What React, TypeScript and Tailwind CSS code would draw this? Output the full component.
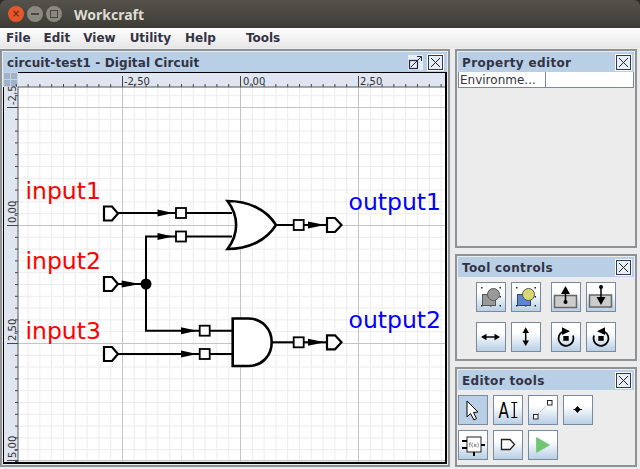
const rulerTicks = Array.from({ length: 37 }, (_, i) => i);

function CloseBox() {
  return (
    <span className="flex h-[15px] w-[15px] items-center justify-center border border-[#2f3a55] bg-[#e8eef6] shadow-[0_0_0_1px_#ffffff]">
      <svg width="11" height="11" viewBox="0 0 11 11">
        <path d="M1 1 L10 10 M10 1 L1 10" stroke="#222" strokeWidth="1" />
      </svg>
    </span>
  );
}

function PanelHeader({ title, maximize }: { title: string; maximize?: boolean }) {
  return (
    <div
      className={
        maximize
          ? "flex h-5 shrink-0 items-center bg-[#b8cfe5] pl-[4px] pr-[4px] font-['DejaVu_Sans'] text-[12px] font-bold tracking-[0.1px] text-[#333344]"
          : "flex h-5 shrink-0 items-center bg-[#b8cfe5] pl-[4px] pr-[3px] font-['DejaVu_Sans'] text-[12px] font-bold tracking-[0.35px] text-[#333344]"
      }
    >
      <span className="flex-1 whitespace-nowrap pt-px">{title}</span>
      {maximize && (
        <span className="mr-[5px] flex h-[15px] w-[15px] items-center justify-center bg-[#e8eef6]">
          <svg width="15" height="15" viewBox="0 0 15 15" fill="none" stroke="#1f2a45">
            <rect x="1.5" y="5.5" width="8" height="8" strokeWidth="1.2" />
            <path d="M3 12 L13 2 M9 1.5 H13.5 V6" />
          </svg>
        </span>
      )}
      <CloseBox />
    </div>
  );
}

function ToolButton({ children, active }: { children: React.ReactNode; active?: boolean }) {
  return (
    <div
      className={
        active
          ? "flex h-[30px] w-[30px] items-center justify-center border border-[#7a8a9c] bg-[#b8cfe5]"
          : "flex h-[30px] w-[30px] items-center justify-center justify-self-end border border-[#7a8a9c] bg-gradient-to-b from-white from-[35%] to-[#b8cfe5]"
      }
    >
      {children}
    </div>
  );
}

function Icon({ children }: { children: React.ReactNode }) {
  return (
    <svg width="28" height="28" viewBox="0 0 28 28">
      {children}
    </svg>
  );
}

function Dots() {
  return (
    <g fill="#222">
      <rect x="4" y="4" width="1.5" height="1.5" />
      <rect x="22.5" y="4" width="1.5" height="1.5" />
      <rect x="4" y="22" width="1.5" height="1.5" />
      <rect x="22.5" y="22" width="1.5" height="1.5" />
      <rect x="22.5" y="13" width="1.5" height="1.5" />
      <rect x="13" y="22" width="1.5" height="1.5" />
    </g>
  );
}

function Viewport() {
  return (
    <svg width="444" height="392" viewBox="3 72 444 392" className="block">
      <rect x="3" y="72" width="444" height="392" fill="#fff" />
      {/* minor grid */}
      <g stroke="#ececec" strokeWidth="1">
        {rulerTicks.map((i) => (
          <line key={i} x1={16.3 + i * 11.8} x2={16.3 + i * 11.8} y1="87" y2="464" />
        ))}
        {rulerTicks.map((i) => (
          <line key={i} y1={95.7 + i * 11.8} y2={95.7 + i * 11.8} x1="18" x2="447" />
        ))}
      </g>
      {/* major grid */}
      <g stroke="#c4c4c4" strokeWidth="1">
        <line x1="122.5" x2="122.5" y1="87" y2="464" />
        <line x1="240.5" x2="240.5" y1="87" y2="464" />
        <line x1="358.5" x2="358.5" y1="87" y2="464" />
        <line y1="107.5" y2="107.5" x1="18" x2="447" />
        <line y1="225.5" y2="225.5" x1="18" x2="447" />
        <line y1="343.5" y2="343.5" x1="18" x2="447" />
        <line y1="460.5" y2="460.5" x1="18" x2="447" />
      </g>
      {/* rulers */}
      <rect x="18" y="73" width="429" height="14" fill="#dfe5f1" />
      <rect x="3" y="87" width="15" height="377" fill="#dfe5f1" />
      <rect x="3" y="72" width="15" height="15" fill="#c6d6e6" />
      <g fill="#9fb3c8">
        <rect x="4" y="73" width="6" height="6" />
        <rect x="11" y="73" width="6" height="6" />
        <rect x="4" y="80" width="6" height="6" />
        <rect x="11" y="80" width="6" height="6" />
      </g>
      <line x1="18" x2="447" y1="87" y2="87" stroke="#555" />
      <line x1="18" x2="18" y1="87" y2="464" stroke="#555" />
      <g stroke="#444" strokeWidth="1">
        {rulerTicks.map((i) => (
          <line key={i} x1={16.3 + i * 11.8} x2={16.3 + i * 11.8} y1="84" y2="87" />
        ))}
        {rulerTicks.map((i) => (
          <line key={i} y1={95.7 + i * 11.8} y2={95.7 + i * 11.8} x1="15" x2="18" />
        ))}
        <line x1="122.5" x2="122.5" y1="76" y2="87" />
        <line x1="240.5" x2="240.5" y1="76" y2="87" />
        <line x1="358.5" x2="358.5" y1="76" y2="87" />
        <line y1="107.5" y2="107.5" x1="7" x2="18" />
        <line y1="225.5" y2="225.5" x1="7" x2="18" />
        <line y1="343.5" y2="343.5" x1="7" x2="18" />
        <line y1="460.5" y2="460.5" x1="7" x2="18" />
      </g>
      <g fontFamily="'DejaVu Sans', sans-serif" fontSize="10" fill="#333">
        <text x="124" y="85">-2,50</text>
        <text x="243" y="85">0,00</text>
        <text x="360" y="85">2,50</text>
        <text transform="translate(16 105) rotate(-90)">-2,5</text>
        <text transform="translate(16 223) rotate(-90)">0,00</text>
        <text transform="translate(16 341) rotate(-90)">2,50</text>
        <text transform="translate(16 458) rotate(-90)">5,00</text>
      </g>
      {/* wires */}
      <g fill="none" stroke="#000" strokeWidth="2">
        <path d="M118 213 H232" />
        <path d="M118 284 H146 M232 236.5 H146 V330.7 H232" />
        <path d="M118 354 H232" />
        <path d="M276 225 H326" />
        <path d="M271.7 342.3 H326" />
      </g>
      <g fill="#000">
        <path d="M157.5 209.5 L173 213 L157.5 216.5 Z" />
        <path d="M157.5 233 L173 236.5 L157.5 240 Z" />
        <path d="M121.7 280.5 L140 284 L121.7 287.5 Z" />
        <path d="M181 327.2 L197 330.7 L181 334.2 Z" />
        <path d="M181 350.5 L197 354 L181 357.5 Z" />
        <path d="M308 221.5 L325 225 L308 228.5 Z" />
        <path d="M308 338.8 L325 342.3 L308 345.8 Z" />
        <circle cx="146" cy="284" r="5.5" />
      </g>
      {/* contacts */}
      <g fill="#fff" stroke="#000" strokeWidth="1.8">
        <rect x="176" y="208" width="10" height="10" />
        <rect x="176" y="231.5" width="10" height="10" />
        <rect x="199.7" y="325.7" width="10" height="10" />
        <rect x="199.7" y="349" width="10" height="10" />
        <rect x="293.7" y="220" width="10" height="10" />
        <rect x="293.7" y="337.3" width="10" height="10" />
      </g>
      {/* ports */}
      <g fill="#fff" stroke="#000" strokeWidth="2.2">
        <path d="M104 206.5 H112 L118 213.5 L112 220.5 H104 Z" />
        <path d="M104 277 H112 L118 284 L112 291 H104 Z" />
        <path d="M104 347 H112 L118 354 L112 361 H104 Z" />
        <path d="M327 218 H335 L341.5 225 L335 232 H327 Z" />
        <path d="M327 335.3 H335 L341.5 342.3 L335 349.3 H327 Z" />
      </g>
      {/* gates */}
      <g fill="#fff" stroke="#000" strokeWidth="2.6">
        <path d="M227.5 201 C248 201 266 209 276 225 C266 241 248 249 227.5 249 C239 234 239 216 227.5 201 Z" />
        <path d="M232.7 318.5 H248 C262 318.5 271.7 329 271.7 342.3 C271.7 356 262 366 248 366 H232.7 Z" />
      </g>
      <g fontFamily="'DejaVu Sans', sans-serif" fontSize="23.5">
        <text x="25.5" y="199" fill="#ff0000">input1</text>
        <text x="25.5" y="269" fill="#ff0000">input2</text>
        <text x="25.5" y="339" fill="#ff0000">input3</text>
        <text x="348.5" y="210" fill="#0000ff">output1</text>
        <text x="348.5" y="328" fill="#0000ff">output2</text>
      </g>
      {/* frame */}
      <path d="M18 72.5 H447" stroke="#000" />
      <path d="M446 72 V464" stroke="#000" strokeWidth="2" />
      <path d="M3 463 H447" stroke="#000" strokeWidth="2" />
      <path d="M3.5 87 V464" stroke="#000" />
    </svg>
  );
}

export default function App() {
  return (
    <div className="flex h-[469px] w-[640px] flex-col overflow-hidden bg-[#ececec] font-['DejaVu_Sans',sans-serif]">
      {/* window title bar */}
      <div className="shrink-0 bg-[#2a2925]">
        <div className="flex h-7 items-center rounded-t-md bg-gradient-to-b from-[#55524c] to-[#3d3c37] pl-[8px]">
          <span className="flex h-4 w-4 items-center justify-center rounded-full bg-[#e4572a] text-[10px] leading-none text-[#5a1d0a]">×</span>
          <span className="ml-[3px] flex h-4 w-4 items-center justify-center rounded-full bg-[#8a8880]">
            <span className="h-[2px] w-2 bg-[#4a4843]" />
          </span>
          <span className="ml-[3px] flex h-4 w-4 items-center justify-center rounded-full bg-[#8a8880]">
            <span className="h-2 w-2 border border-[#4a4843]" />
          </span>
          <span className="ml-[12px] font-['Noto_Sans'] text-[14px] font-bold text-[#dfdbd2]">Workcraft</span>
        </div>
      </div>

      {/* menu bar */}
      <div className="flex h-[20px] shrink-0 items-center bg-gradient-to-b from-white to-[#e6e6e6] pl-[6px] text-[12px] font-bold text-[#333344]">
        <span>File</span>
        <span className="ml-[13px]">Edit</span>
        <span className="ml-[13px]">View</span>
        <span className="ml-[14px]">Utility</span>
        <span className="ml-[14px]">Help</span>
        <span className="ml-[30px]">Tools</span>
      </div>

      <div className="flex min-h-0 flex-1 gap-[5px] pt-px">
        {/* document */}
        <div className="flex h-[418px] w-[450px] flex-col border-2 border-[#8f9396] p-px">
          <PanelHeader title="circuit-test1 - Digital Circuit" maximize />
          <Viewport />
        </div>

        {/* side panels */}
        <div className="flex w-[182px] flex-col gap-[6px]">
          <div className="flex h-[199px] flex-col border-2 border-[#8f9396] p-px">
            <PanelHeader title="Property editor" />
            <div className="flex h-[16px] border-x border-b border-[#7a8a9c] bg-white text-[12px] leading-[17px] text-[#333344]">
              <span className="w-[87px] border-r border-[#7a8a9c] pl-[1px]">Environme...</span>
            </div>
          </div>

          <div className="flex h-[107px] flex-col border-2 border-[#8f9396] p-px">
            <PanelHeader title="Tool controls" />
            <div className="grid grid-cols-[30px_30px_35px_30px] gap-x-[5px] gap-y-[10px] pl-[18px] pt-[5px]">
              <ToolButton>
                <Icon>
                  <Dots />
                  <rect x="5.5" y="11.5" width="13" height="11" fill="#999" stroke="#555" />
                  <circle cx="16.5" cy="11.5" r="6" fill="#999" stroke="#555" />
                </Icon>
              </ToolButton>
              <ToolButton>
                <Icon>
                  <Dots />
                  <rect x="5.5" y="11.5" width="13" height="11" fill="#5b84d6" stroke="#444" />
                  <circle cx="16.5" cy="11.5" r="6" fill="#d8d870" stroke="#555" />
                </Icon>
              </ToolButton>
              <ToolButton>
                <Icon>
                  <rect x="2.5" y="12.5" width="22" height="12" fill="#ccc" stroke="#666" strokeWidth="1.5" />
                  <path d="M13.5 19 V10" stroke="#000" strokeWidth="1.5" />
                  <path d="M9 11 L13.5 3 L18 11 Z" fill="#000" />
                  <circle cx="13.5" cy="19" r="2" fill="#000" />
                </Icon>
              </ToolButton>
              <ToolButton>
                <Icon>
                  <rect x="2.5" y="12" width="22" height="12" fill="#ccc" stroke="#666" strokeWidth="1.5" />
                  <path d="M14 4 V15" stroke="#000" strokeWidth="1.5" />
                  <path d="M9.5 14 L14 22 L18.5 14 Z" fill="#000" />
                  <circle cx="14" cy="4" r="2" fill="#000" />
                </Icon>
              </ToolButton>
              <ToolButton>
                <Icon>
                  <path d="M7 14 H20" stroke="#000" strokeWidth="1.5" />
                  <path d="M9.5 10.8 L4 14 L9.5 17.2 Z M17.5 10.8 L23 14 L17.5 17.2 Z" fill="#000" />
                </Icon>
              </ToolButton>
              <ToolButton>
                <Icon>
                  <path d="M13.7 7 V20" stroke="#000" strokeWidth="1.5" />
                  <path d="M10.5 10 L13.7 4.3 L17 10 Z M10.5 17.5 L13.7 23 L17 17.5 Z" fill="#000" />
                </Icon>
              </ToolButton>
              <ToolButton>
                <Icon>
                  <path d="M10.5 8.7 A7.5 7.5 0 1 0 21 12.5" fill="none" stroke="#000" strokeWidth="1.8" />
                  <path d="M10 4.3 L18 8.2 L10 12 Z" fill="#000" />
                  <rect x="11.3" y="13" width="5.4" height="4.8" fill="#000" />
                </Icon>
              </ToolButton>
              <ToolButton>
                <Icon>
                  <path d="M17.5 8.7 A7.5 7.5 0 1 1 7 12.5" fill="none" stroke="#000" strokeWidth="1.8" />
                  <path d="M18 4.3 L10 8.2 L18 12 Z" fill="#000" />
                  <rect x="11.3" y="13" width="5.4" height="4.8" fill="#000" />
                </Icon>
              </ToolButton>
            </div>
          </div>

          <div className="flex h-[100px] flex-col border-2 border-[#8f9396] p-px">
            <PanelHeader title="Editor tools" />
            <div className="grid grid-cols-[30px_30px_30px_30px] gap-[5px] pt-[5px]">
              <ToolButton active>
                <Icon>
                  <path d="M8 5 V21 L11.5 17.5 L15 24 L17.5 22.5 L14.5 16.5 L19 16 Z" fill="#fff" stroke="#000" strokeWidth="1" />
                </Icon>
              </ToolButton>
              <ToolButton>
                <Icon>
                  <text transform="translate(4.5 22) scale(0.72 1)" fontSize="21" fontFamily="'DejaVu Sans', sans-serif" fill="#000">A</text>
                  <path d="M17.3 6.5 H23.3 M20.3 6.5 V21.5 M17.3 21.5 H23.3" stroke="#000" strokeWidth="1.2" fill="none" />
                </Icon>
              </ToolButton>
              <ToolButton>
                <Icon>
                  <rect x="4.5" y="18.5" width="4.5" height="4.5" fill="#fff" stroke="#222" />
                  <rect x="18.5" y="4.5" width="4.5" height="4.5" fill="#fff" stroke="#222" />
                  <path d="M9 18 L18.5 9" stroke="#999" strokeDasharray="1.5 1.5" />
                </Icon>
              </ToolButton>
              <ToolButton>
                <Icon>
                  <path d="M13.5 10.5 L16 13.5 L13.5 16.5 L11 13.5 Z M9.5 13.5 H18" fill="#000" stroke="#000" />
                </Icon>
              </ToolButton>
              <ToolButton>
                <Icon>
                  <rect x="8" y="6" width="14" height="15" fill="#fff" stroke="#222" />
                  <text x="15" y="15.5" textAnchor="middle" fontSize="6" fontFamily="'DejaVu Sans', sans-serif" fill="#444">f(x)</text>
                  <path d="M3 10 H8 M3 17 H8 M22 14 H26 M15 21 V25" stroke="#000" strokeWidth="2" />
                </Icon>
              </ToolButton>
              <ToolButton>
                <Icon>
                  <path d="M7.5 8.5 H16 L20.5 13.5 L16 18.5 H7.5 Z" fill="#fff" stroke="#222" strokeWidth="1.3" />
                </Icon>
              </ToolButton>
              <ToolButton>
                <Icon>
                  <path d="M7.5 6.5 L20.5 14 L7.5 21.5 Z" fill="#6cc870" stroke="#8fc08f" />
                </Icon>
              </ToolButton>
            </div>
          </div>
        </div>
      </div>
    </div>
  );
}
